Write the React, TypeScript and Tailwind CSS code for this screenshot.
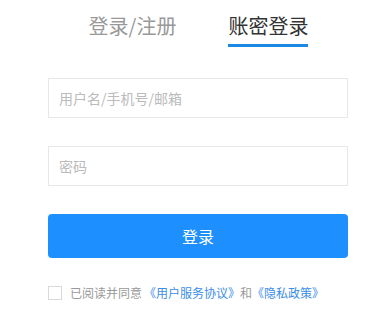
import { useState } from 'react';

export default function App() {
    const [tab, setTab] = useState<'login' | 'account'>('account');
    const [agreed, setAgreed] = useState(false);

    return (
        <div className="min-h-screen w-[392px] bg-white font-['Noto_Sans_CJK_SC','Noto_Sans',sans-serif]">
            <div className="w-[300px] ml-[48px]">
                {/* Tabs */}
                <div className="flex justify-center gap-[52px] pt-[12px] pl-[1px]">
                    <button
                        onClick={() => setTab('login')}
                        className={`relative text-[20px] leading-[28px] pb-[8px] ${tab === 'login' ? 'text-[#333333]' : 'text-[#999999]'}`}
                    >
                        登录/注册
                        {tab === 'login' && <span className="absolute left-0 right-0 bottom-[1px] h-[3px] bg-[#1e88e5]" />}
                    </button>
                    <button
                        onClick={() => setTab('account')}
                        className={`relative text-[20px] leading-[28px] pb-[8px] ${tab === 'account' ? 'text-[#333333]' : 'text-[#999999]'}`}
                    >
                        账密登录
                        {tab === 'account' && <span className="absolute left-0 right-0 bottom-[1px] h-[3px] bg-[#1e88e5]" />}
                    </button>
                </div>

                {/* Inputs */}
                <div className="mt-[30px] flex flex-col gap-[28px]">
                    <input
                        type="text"
                        placeholder="用户名/手机号/邮箱"
                        className="h-[40px] w-full border border-[#e8e8e8] px-[10px] text-[14px] text-[#333] placeholder:text-[#bbbbbb] outline-none"
                    />
                    <input
                        type="password"
                        placeholder="密码"
                        className="h-[40px] w-full border border-[#e8e8e8] px-[10px] text-[14px] text-[#333] placeholder:text-[#bbbbbb] outline-none"
                    />
                </div>

                <button className="mt-[28px] h-[44px] w-full rounded-[4px] bg-[#1e8fff] text-white text-[16px]">
                    登录
                </button>

                {/* Agreement */}
                <div className="mt-[26px] flex items-center text-[12px] text-[#999999]">
                    <button
                        onClick={() => setAgreed(!agreed)}
                        className={`w-[14px] h-[14px] border ${agreed ? 'bg-[#1e8fff] border-[#1e8fff]' : 'border-[#d9d9d9] bg-white'} mr-[8px]`}
                    />
                    <span>已阅读并同意</span>
                    <span className="text-[#3a8ee6] ml-[2px]">《用户服务协议》</span>
                    <span>和</span>
                    <span className="text-[#3a8ee6]">《隐私政策》</span>
                </div>
            </div>
        </div>
    );
}
